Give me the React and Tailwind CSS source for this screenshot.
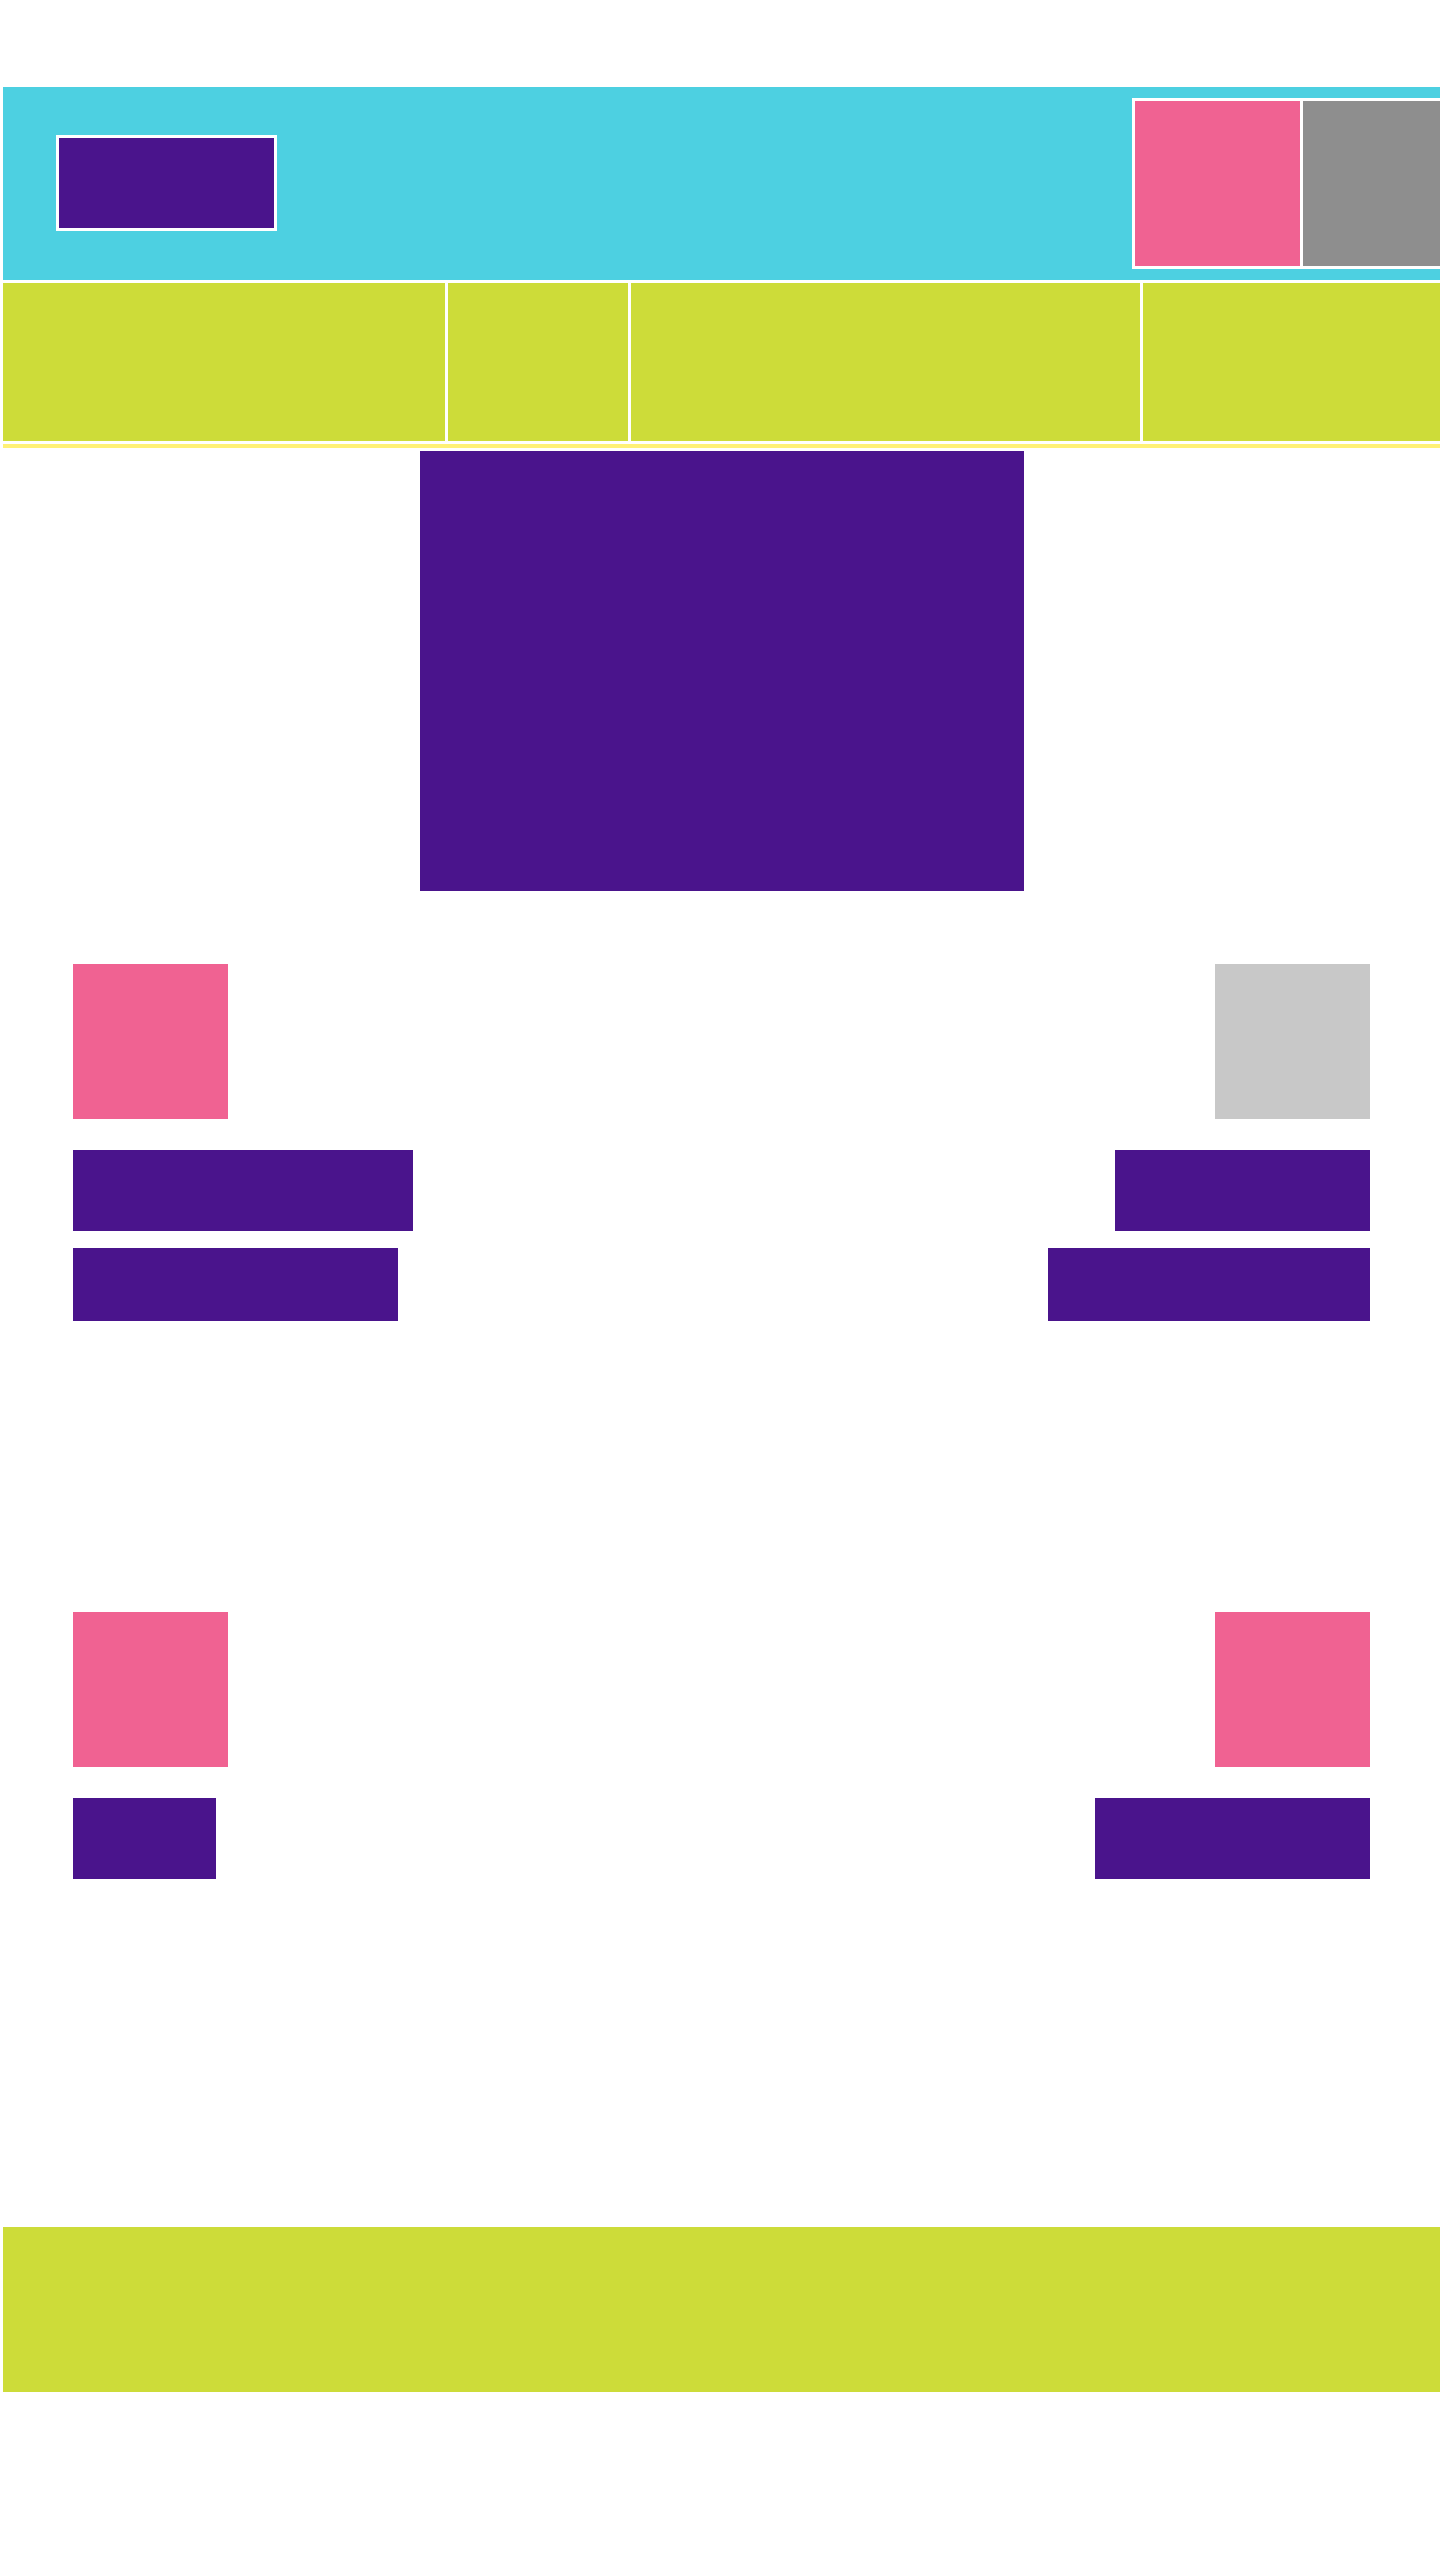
const Block = ({ className }) => <div className={className} />;

const NavRow = () => {
  const cols = ["w-[442px]", "w-[180px]", "w-[509px]", "flex-1"];
  return (
    <div className="flex gap-[3px] bg-white pt-[3px] pb-[3px]">
      {cols.map((w, i) => (
        <div key={i} className={`${w} h-[158px] bg-[#cddc39]`} />
      ))}
    </div>
  );
};

const MediaRow = ({ leftColor, rightColor, leftBars, rightBars }) => (
  <div className="flex justify-between px-[70px]">
    <div className="flex flex-col items-start">
      <Block className={`w-[155px] h-[155px] ${leftColor}`} />
      <div className="mt-[31px] flex flex-col items-start gap-[17px]">
        {leftBars.map((b, i) => (
          <Block key={i} className={`bg-[#4a148c] ${b}`} />
        ))}
      </div>
    </div>
    <div className="flex flex-col items-end">
      <Block className={`w-[155px] h-[155px] ${rightColor}`} />
      <div className="mt-[31px] flex flex-col items-end gap-[17px]">
        {rightBars.map((b, i) => (
          <Block key={i} className={`bg-[#4a148c] ${b}`} />
        ))}
      </div>
    </div>
  </div>
);

export default function App() {
  return (
    <div className="min-h-[2560px] overflow-hidden bg-white pl-[3px] pt-[87px] font-['Liberation_Sans',sans-serif]">
      {/* header */}
      <header className="flex h-[193px] items-start bg-[#4dd0e1]">
        <div className="ml-[53px] mt-[48px] h-[96px] w-[221px] border-[3px] border-white bg-[#4a148c]" />
        <div className="ml-auto mr-[-31px] mt-[11px] flex shrink-0 gap-[3px] border-[3px] border-white bg-white">
          <div className="h-[165px] w-[165px] bg-[#f06292]" />
          <div className="h-[165px] w-[165px] bg-[#8e8e8e]" />
        </div>
      </header>

      <NavRow />
      <div className="h-[4px] bg-[#fff176]" />

      {/* hero */}
      <div className="mx-auto mt-[3px] h-[440px] w-[604px] bg-[#4a148c]" />

      <div className="mt-[73px]">
        <MediaRow
          leftColor="bg-[#f06292]"
          rightColor="bg-[#c8c8c8]"
          leftBars={["w-[340px] h-[81px]", "w-[325px] h-[73px]"]}
          rightBars={["w-[255px] h-[81px]", "w-[322px] h-[73px]"]}
        />
      </div>

      <div className="mt-[291px]">
        <MediaRow
          leftColor="bg-[#f06292]"
          rightColor="bg-[#f06292]"
          leftBars={["w-[143px] h-[81px]"]}
          rightBars={["w-[275px] h-[81px]"]}
        />
      </div>

      {/* footer */}
      <footer className="mt-[348px] h-[165px] bg-[#cddc39]" />
    </div>
  );
}
